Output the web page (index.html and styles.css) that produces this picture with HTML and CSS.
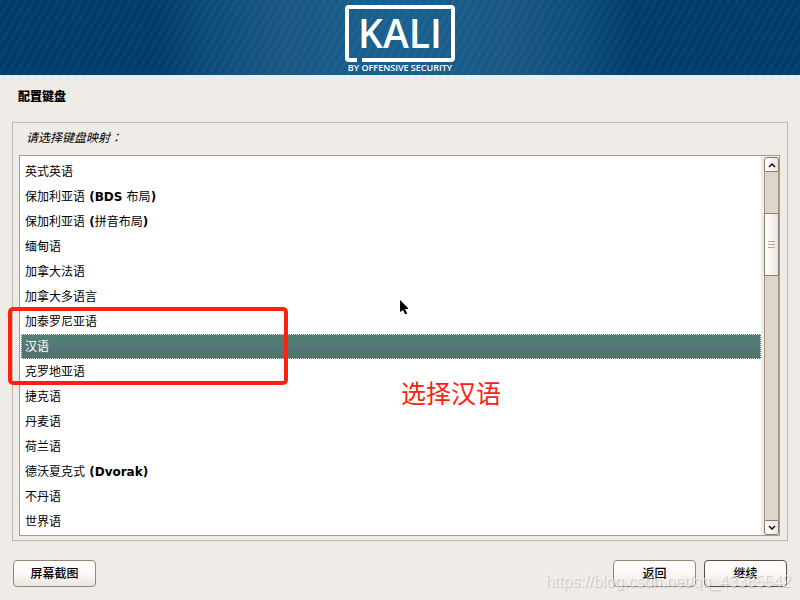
FILE: index.html
```html
<!DOCTYPE html>
<html lang="zh-CN">
<head>
    <meta charset="UTF-8">
    <title>配置键盘</title>
    <link rel="stylesheet" href="styles.css">
</head>
<body>

<header class="banner">
    <svg class="logo" width="112" height="70" viewBox="0 0 112 70" role="img" aria-label="Kali by Offensive Security">
        <path d="M13 56H5Q3 56 3 54V5Q3 3 5 3H107Q109 3 109 5V54Q109 56 107 56H18" fill="none" stroke="#fff" stroke-width="4"/>
        <path d="M14 53H18V59H14Z" fill="#18608f"/>
        <text class="logo-name" x="56" y="44" text-anchor="middle">KALI</text>
        <text class="logo-by" x="56" y="67" text-anchor="middle">BY OFFENSIVE SECURITY</text>
    </svg>
</header>

<form class="installer">
    <h1>配置键盘</h1>

    <div class="panel">
        <p class="prompt" id="prompt">请选择键盘映射<span class="colon" lang="zh-TW">：</span></p>

        <div class="list-frame">
            <div class="list" role="radiogroup" aria-labelledby="prompt">
                <label class="row"><input type="radio" name="keymap">英式英语</label>
                <label class="row"><input type="radio" name="keymap">保加利亚语<b> (BDS </b>布局<b>)</b></label>
                <label class="row"><input type="radio" name="keymap">保加利亚语<b> (</b>拼音布局<b>)</b></label>
                <label class="row"><input type="radio" name="keymap">缅甸语</label>
                <label class="row"><input type="radio" name="keymap">加拿大法语</label>
                <label class="row"><input type="radio" name="keymap">加拿大多语言</label>
                <label class="row"><input type="radio" name="keymap">加泰罗尼亚语</label>
                <label class="row"><input type="radio" name="keymap" checked>汉语</label>
                <label class="row"><input type="radio" name="keymap">克罗地亚语</label>
                <label class="row"><input type="radio" name="keymap">捷克语</label>
                <label class="row"><input type="radio" name="keymap">丹麦语</label>
                <label class="row"><input type="radio" name="keymap">荷兰语</label>
                <label class="row"><input type="radio" name="keymap">德沃夏克式<b> (Dvorak)</b></label>
                <label class="row"><input type="radio" name="keymap">不丹语</label>
                <label class="row"><input type="radio" name="keymap">世界语</label>
            </div>

            <div class="scrollbar">
                <button type="button" class="scroll-btn up" aria-label="向上">
                    <svg width="8" height="6" viewBox="0 0 8 6"><path d="M1 5L4 2L7 5" fill="none" stroke="#111" stroke-width="1.5"/></svg>
                </button>
                <div class="track">
                    <div class="thumb"><i></i><i></i><i></i></div>
                </div>
                <button type="button" class="scroll-btn down" aria-label="向下">
                    <svg width="8" height="6" viewBox="0 0 8 6"><path d="M1 1L4 4L7 1" fill="none" stroke="#111" stroke-width="1.5"/></svg>
                </button>
            </div>

            <!-- annotations -->
            <div class="mark-box"></div>
            <div class="mark-text">选择汉语</div>
            <svg class="cursor" width="10" height="16" viewBox="0 0 10 16"><path d="M0 0L8 8V9H5L7 13V14H5L3 10L0 12Z" fill="#000"/></svg>
        </div>
    </div>

    <div class="actions">
        <button type="button" class="btn">屏幕截图</button>
        <div class="nav">
            <button type="button" class="btn">返回</button>
            <button type="submit" class="btn default">继续</button>
        </div>
    </div>
</form>

<div class="watermark">https://blog.csdn.net/qq_43385542</div>

</body>
</html>
```
FILE: styles.css
```css
* {
  box-sizing: border-box;
}

body {
  margin: 0;
  min-height: 100vh;
  display: flex;
  flex-direction: column;
  position: relative;
  background: #efebe7;
  color: #000;
  font-family: "Noto Sans CJK SC", sans-serif;
  font-size: 12px;
  line-height: 18px;
}

/* Banner */
.banner {
  height: 75px;
  display: flex;
  justify-content: center;
  padding-top: 4px;
  background:
    repeating-linear-gradient(120deg, rgba(255, 255, 255, 0.03) 0 2px, transparent 4px 7px),
    linear-gradient(to right, #003c6c 0%, #003c6c 20%, #0c4c7a 26%, #1a5784 36%, #18608f 50%, #1a5784 63%, #0c4c7a 73%, #003c6c 79%, #003c6c 100%);
}

.logo-name {
  font: 600 39px "Open Sans", sans-serif;
  fill: #fff;
}

.logo-by {
  font: 600 9px "Open Sans", sans-serif;
  fill: #fff;
}

/* Form */
.installer {
  flex: 1;
  display: flex;
  flex-direction: column;
  padding: 12px 12px 13px;
}

h1 {
  margin: 0 6px 17px;
  font-size: 12px;
  font-weight: 900;
  line-height: 18px;
}

.panel {
  flex: 1;
  display: flex;
  flex-direction: column;
  padding: 5px 7px 4px 6px;
  border: 1px solid #c4b8a8;
}

.prompt {
  margin: 0 7px 9px;
  font-style: italic;
}

.colon {
  font-family: "Noto Sans CJK TC", sans-serif;
}

.list-frame {
  flex: 1;
  position: relative;
  display: flex;
  gap: 3px;
  border: 1px solid #a89a88;
  background: #efebe7;
}

.list {
  flex: 1;
  padding: 3px 0 0 1px;
  background: #fff;
}

.row {
  display: block;
  height: 25px;
  padding: 2px 3px;
  border: 1px solid transparent;
}

.row input {
  position: absolute;
  appearance: none;
  margin: 0;
}

.row b {
  font-family: "DejaVu Sans", sans-serif;
}

.row:has(input:checked) {
  border: 1px dotted #d4e0dc;
  background: linear-gradient(#52806e, #54777a 50%, #4f7364) border-box #52786f;
  color: #fff;
}

/* Scrollbar */
.scrollbar {
  width: 15px;
  margin: 1px 0 0;
  display: flex;
  flex-direction: column;
}

.scroll-btn {
  height: 15px;
  padding: 0;
  display: flex;
  align-items: center;
  justify-content: center;
  border: 1px solid #8a7d6c;
  background: linear-gradient(to right, #fff, #ece4e0);
}

.up {
  border-radius: 3px 3px 0 0;
}

.down {
  border-radius: 0 0 3px 3px;
}

.track {
  flex: 1;
  padding-top: 41px;
  border: solid #a3947f;
  border-width: 0 1px;
  background: #dfd5ca;
}

.thumb {
  height: 63px;
  margin: 0 -1px;
  display: flex;
  flex-direction: column;
  align-items: center;
  justify-content: center;
  gap: 2px;
  border: 1px solid #8a7d6c;
  background: linear-gradient(to right, #fff, #ece4e0);
}

.thumb i {
  width: 7px;
  height: 1px;
  background: #b5a794;
}

/* Buttons */
.actions {
  display: flex;
  justify-content: space-between;
  padding: 19px 1px 0;
}

.nav {
  display: flex;
  gap: 8px;
}

.btn {
  width: 83px;
  height: 27px;
  padding: 0 0 2px;
  border: 1px solid #94866f;
  border-radius: 4px;
  background: linear-gradient(#fff, #fbf8f7 50%, #ece5e1);
  color: #000;
  font: 500 12px "Noto Sans CJK SC", sans-serif;
}

.btn.default {
  border-color: #5c4f42;
}

/* Annotations */
.mark-box {
  position: absolute;
  left: -12px;
  top: 151px;
  width: 280px;
  height: 78px;
  border: 4px solid #ff2010;
  border-radius: 5px;
}

.mark-text {
  position: absolute;
  left: 381px;
  top: 218px;
  color: #ff2010;
  font-size: 25px;
  line-height: 36px;
}

.cursor {
  position: absolute;
  left: 380px;
  top: 144px;
}

.watermark {
  position: absolute;
  right: 9px;
  bottom: 8px;
  color: rgba(255, 255, 255, 0.6);
  font: 16px/20px "Liberation Sans", sans-serif;
  text-shadow: 1px 1px 1px rgba(0, 0, 0, 0.18);
  pointer-events: none;
}
```
